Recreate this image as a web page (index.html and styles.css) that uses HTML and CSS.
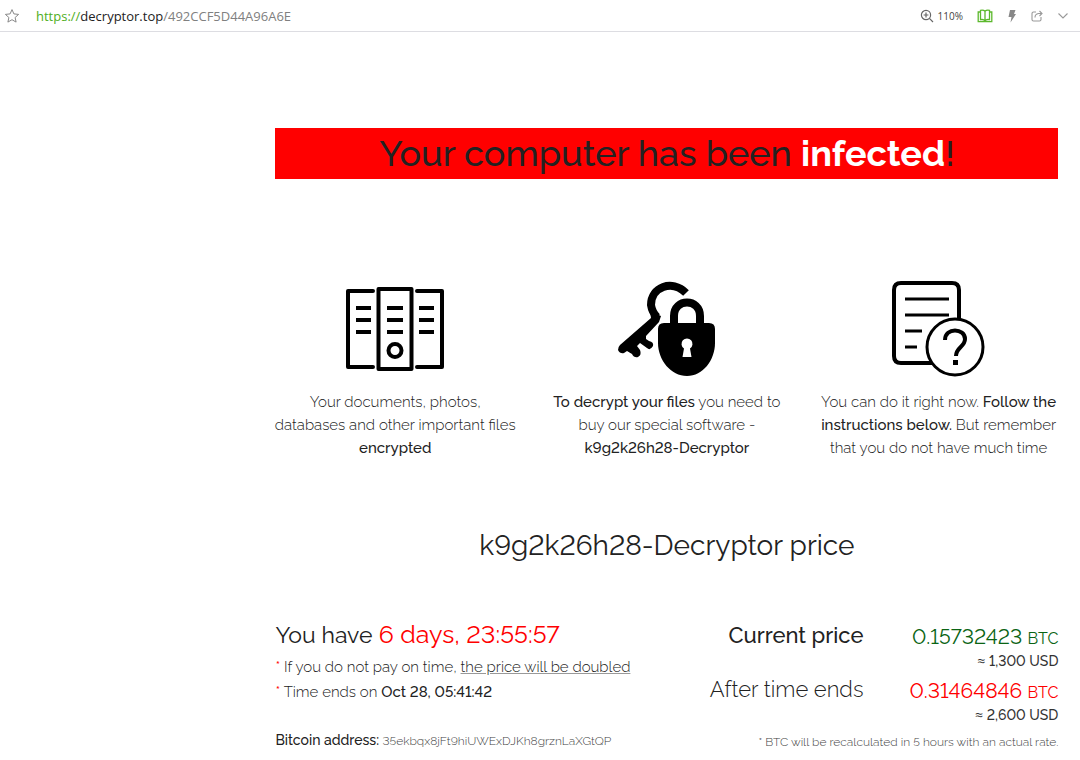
FILE: index.html
```
<!DOCTYPE html>
<html lang="en">
<head>
<meta charset="utf-8">
<title>Your computer has been infected</title>
<link rel="stylesheet" href="styles.css">
</head>
<body>
<header class="toolbar">
  <button class="tool" type="button" aria-label="Bookmark">
    <svg width="16" height="16" viewBox="0 0 16 16" fill="none" stroke="#888" stroke-width="1"><path d="M8 1.6l1.9 4.3 4.7.5-3.5 3.1 1 4.6L8 11.7l-4.1 2.4 1-4.6L1.4 6.4l4.7-.5z"/></svg>
  </button>
  <div class="address"><span class="scheme">https://</span><span class="host">decryptor.top</span>/492CCF5D44A96A6E</div>
  <button class="tool zoom" type="button">
    <svg width="14" height="14" viewBox="0 0 14 14" fill="none" stroke="#666" stroke-width="1.2"><circle cx="6" cy="6" r="4.6"/><path d="M9.4 9.4l3.6 3.6M3.6 6h4.8M6 3.6v4.8"/></svg>
    <span>110%</span>
  </button>
  <button class="tool" type="button" aria-label="Reader">
    <svg width="16" height="14" viewBox="0 0 16 14" fill="none" stroke="#5cb82c" stroke-width="1.3"><path d="M8 2.5v9.5M8 2.2C6.800 1 5 1 3.500 1.300v9.400C5 10.300 7 10.500 8 12c1-1.500 3-1.700 4.500-1.300V1.300C11 1 9.200 1 8 2.200zM3.500 3H1.200v9.600h13.600V3h-2.300"/></svg>
  </button>
  <button class="tool" type="button" aria-label="Speed mode">
    <svg width="10" height="14" viewBox="0 0 10 14" fill="#888"><path d="M3 1h5.500L7 5h2L3.500 13.500l1-5.500H1.500z"/></svg>
  </button>
  <button class="tool" type="button" aria-label="Share">
    <svg width="12" height="12" viewBox="0 0 12 12" fill="none" stroke="#999" stroke-width="1.1"><path d="M5 2H2.500Q1 2 1 3.500v6Q1 11 2.500 11h6Q10 11 10 9.500V7M4 7.500Q4 4 7.500 3.500h3.500M8.500 1L11 3.500 8.500 6"/></svg>
  </button>
  <button class="tool" type="button" aria-label="More">
    <svg width="12" height="8" viewBox="0 0 12 8" fill="none" stroke="#999" stroke-width="1.1"><path d="M1.500 1.500L6 6l4.500-4.500"/></svg>
  </button>
</header>
<main class="page">
  <h1 class="banner">Your computer has been <strong>infected</strong>!</h1>
  <section class="facts">
    <article class="fact">
      <svg class="picture" width="120" height="104" viewBox="0 0 120 104" fill="none" stroke="#000" stroke-width="4" stroke-linecap="round" stroke-linejoin="round">
        <path d="M38 16H13v76h25M82 16h25v76H82M43.500 14h33v80h-33z"/>
        <path stroke-linecap="butt" d="M21 33h15M21 45h15M21 57h15M52 33h16M52 45h16M52 57h16M84 33h15M84 45h15M84 57h15"/>
        <circle cx="60" cy="75.500" r="6.500"/>
      </svg>
      <p>Your documents, photos,<br>databases and other important files<br><b>encrypted</b></p>
    </article>
    <article class="fact">
      <svg class="picture" width="120" height="104" viewBox="3 0 120 104">
        <path fill="none" stroke="#000" stroke-width="8" d="M82 18C68 4 47 12 47 30q1 7 6 12"/>
        <path d="M46 36l11 5-2 6-13 14 0 3 3 2q5 1 4 5-3 5-6 2l-7-5-3 3 3 4q2 5-2 7-4 1-6-3l-5-3-3 2q-4 1-6-3 0-3 2-5L47 43z"/>
        <path fill="none" stroke="#000" stroke-width="8" d="M70 51V41c0-18 26-18 26 0v10"/>
        <path fill-rule="evenodd" d="M60 48h45q6 0 6 6v14c0 17-12 33-28 33S54 85 54 68V54q0-6 6-6zM80 73.500L78.500 82h9L86 73.500a5.500 5.500 0 1 0-6 0z"/>
      </svg>
      <p><b>To decrypt your files</b> you need to buy our special software - <b class="keep">k9g2k26h28-Decryptor</b></p>
    </article>
    <article class="fact">
      <svg class="picture" width="120" height="104" viewBox="0 0 120 104" fill="none" stroke="#000" stroke-width="4">
        <path d="M80 43V15q0-7-7-7H22q-7 0-7 7v66q0 7 7 7h31"/>
        <path stroke-width="3" d="M26 24h44M26 40h44M26 56h17M26 72h12"/>
        <circle cx="76" cy="72" r="28" stroke-width="3"/>
        <path d="M66 65c0-13 20-12 20-1 0 8-9 8-9 17"/>
        <path fill="#000" stroke="none" d="M74 85h5v5h-5z"/>
      </svg>
      <p>You can do it right now. <b>Follow the instructions below.</b> But remember that you do not have much time</p>
    </article>
  </section>
  <h2 class="title">k9g2k26h28-Decryptor price</h2>
  <section class="payment">
    <div class="deadline">
      <p class="lead"><strong>You have</strong> <span class="clock">6 days, 23:55:57</span></p>
      <p class="note"><span class="star">*</span> If you do not pay on time, <span class="doubled">the price will be doubled</span></p>
      <p class="note"><span class="star">*</span> Time ends on <b>Oct 28, 05:41:42</b></p>
      <p class="wallet"><b>Bitcoin address:</b> <span class="code">35ekbqx8jFt9hiUWExDJKh8grznLaXGtQP</span></p>
    </div>
    <div class="prices">
      <table class="rates">
        <tr><th scope="row" class="current">Current price</th><td class="green">0.15732423 <small>BTC</small><span class="usd"><span class="approx">≈</span> 1,300 USD</span></td></tr>
        <tr><th scope="row">After time ends</th><td class="red">0.31464846 <small>BTC</small><span class="usd"><span class="approx">≈</span> 2,600 USD</span></td></tr>
      </table>
      <p class="footnote">* BTC will be recalculated in 5 hours with an actual rate.</p>
    </div>
  </section>
</main>
</body>
</html>
```
FILE: styles.css
```
* { box-sizing: border-box; }
body {
  margin: 0;
  background: #fff;
  color: #222;
  font-family: Raleway, Lato, "Open Sans", sans-serif;
  font-variant-numeric: lining-nums;
  font-weight: 300;
}
h1, h2, p { margin: 0; }
b { font-weight: 500; color: #222; }
.toolbar {
  display: flex;
  align-items: center;
  gap: 14px;
  height: 32px;
  padding: 0 11px 0 4px;
  border-bottom: 1px solid #dddde2;
  font-family: "Open Sans", "Noto Sans", sans-serif;
}
.tool {
  display: flex;
  align-items: center;
  gap: 4px;
  padding: 0;
  border: 0;
  background: none;
  font: 400 10px "Open Sans", "Noto Sans", sans-serif;
  color: #444;
}
.address { flex: 1; padding-left: 2px; font-size: 13px; font-weight: 400; color: #808080; }
.scheme { color: #4fae22; }
.host { color: #222; }
.page { margin: 96px 2% 16px 25.5%; }
.banner {
  background: #f00;
  color: #222;
  text-align: center;
  font-size: 36px;
  line-height: 51px;
  font-weight: 500;
}
.banner strong { color: #fff; font-weight: 700; }
.facts {
  display: grid;
  grid-template-columns: repeat(3, 1fr);
  gap: 32px;
  margin-top: 96px;
}
.fact { text-align: center; font-size: 15px; line-height: 23px; }
.fact p { margin: 0 -8px; }
.picture { display: block; margin: 0 auto 12px; }
.keep { white-space: nowrap; }
.title {
  margin-top: 66px;
  text-align: center;
  font-size: 28px;
  line-height: 40px;
  font-weight: 400;
}
.payment {
  display: flex;
  justify-content: space-between;
  margin-top: 50px;
}
.lead { margin-bottom: 2px; font-size: 25px; line-height: 36px; }
.lead strong { font-size: 23px; font-weight: 400; }
.clock { color: #f00; font-weight: 400; }
.note { font-size: 15px; line-height: 25px; }
.star { color: #f00; font-weight: 400; }
.doubled { text-decoration: underline #999; }
.wallet { margin-top: 23px; font-size: 14px; line-height: 24px; }
.code { font-size: 12px; color: #444; }
.prices { text-align: right; }
.rates { border-collapse: collapse; margin-left: auto; }
.rates th, .rates td { padding: 0; vertical-align: top; text-align: right; }
.rates th { font-size: 22px; line-height: 38px; font-weight: 300; padding-right: 46px; }
.rates .current { font-weight: 500; }
.rates td { padding-top: 6px; font-size: 21px; line-height: 30px; font-weight: 400; }
.rates small { font-size: 16px; line-height: 16px; }
.usd { display: block; font-size: 14px; line-height: 18px; font-weight: 500; color: #333; }
.approx { font-family: "Open Sans", sans-serif; font-weight: 400; }
.rates .green { color: #0a6414; }
.rates .red { color: #f00; }
.footnote { margin-top: 8px; font-size: 12px; line-height: 20px; color: #444; }
```
